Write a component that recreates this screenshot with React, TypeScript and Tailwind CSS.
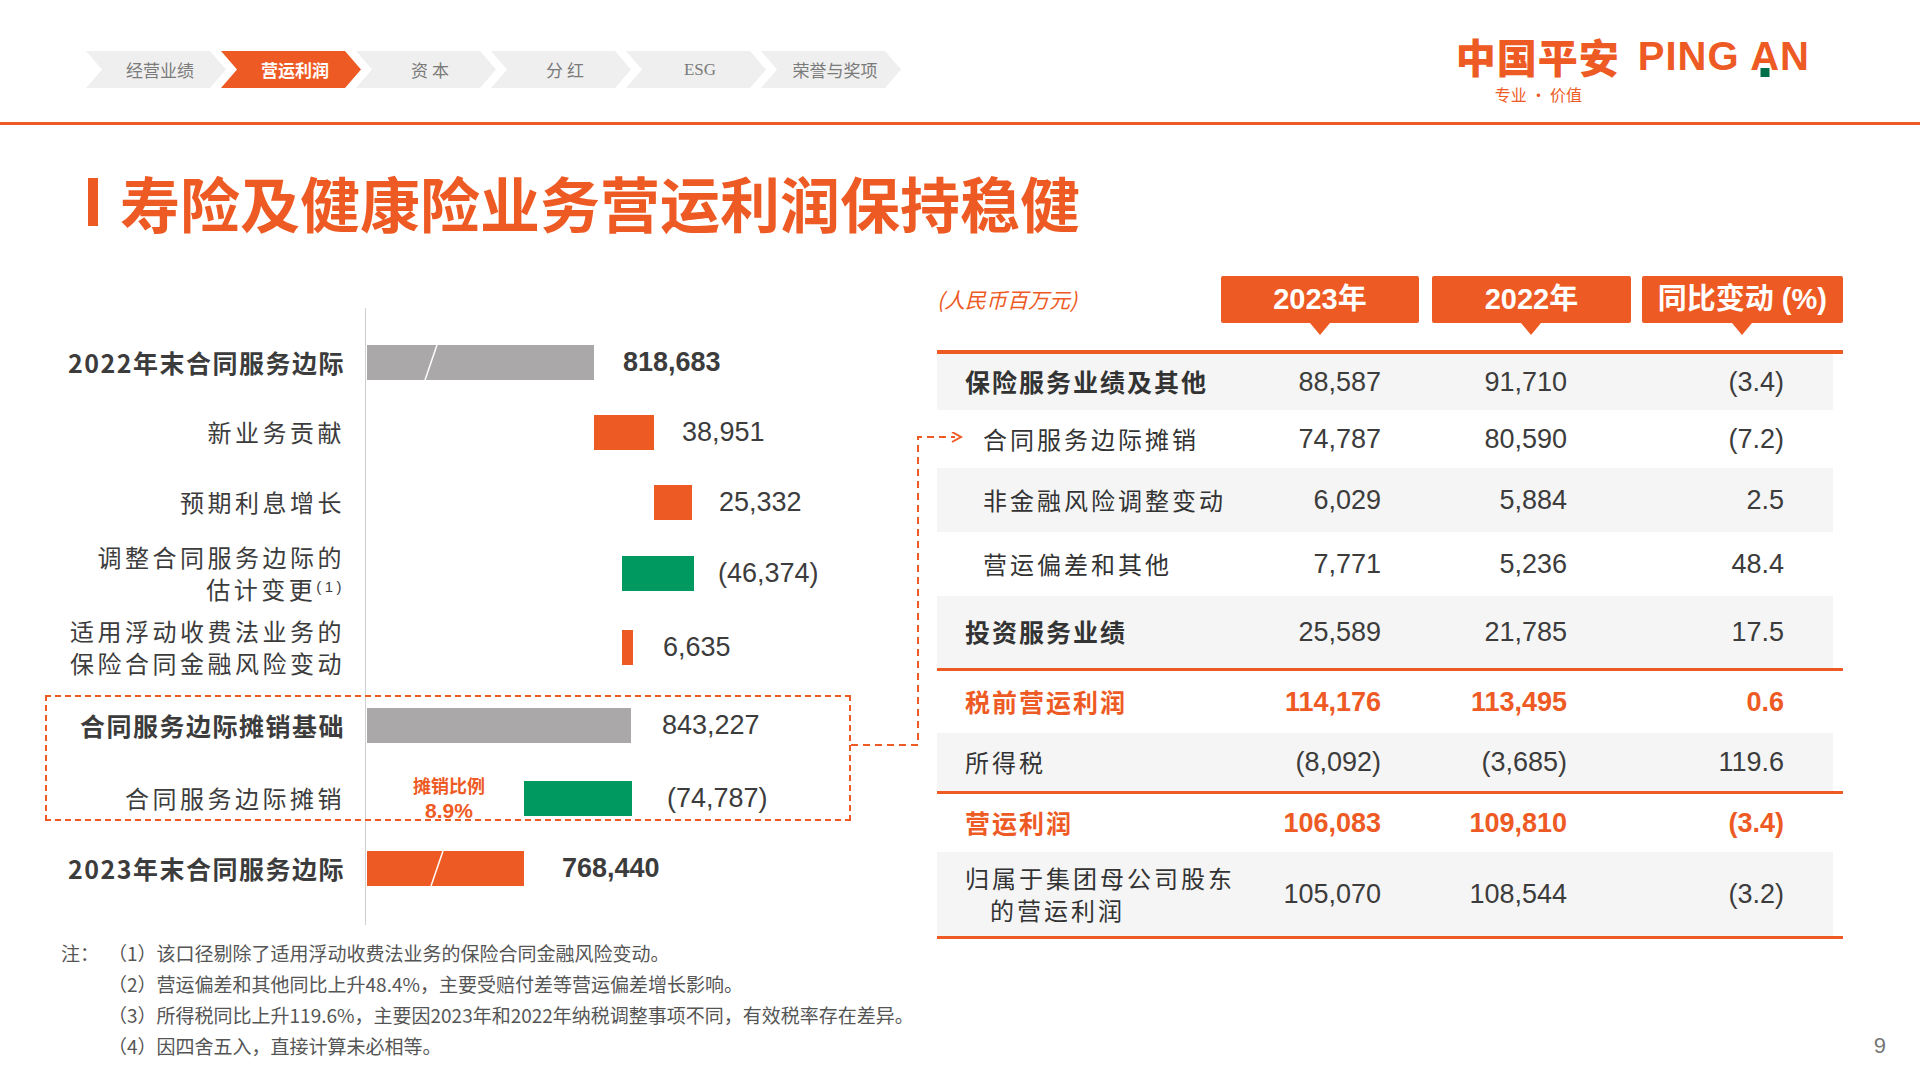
import React from "react";

const OR = "#ee5a24";
const cjk = { fontFamily: '"Noto Sans CJK SC", "Noto Sans", sans-serif' };
const num = { fontFamily: '"Liberation Sans", Arial, sans-serif' };

function Tabs() {
  const tabs = ["经营业绩", "营运利润", "资 本", "分 红", "ESG", "荣誉与奖项"];
  return (
    <div className="flex pt-[51px] pl-[86px]">
      {tabs.map((t, i) => (
        <div
          key={t}
          className={`flex h-[37px] w-[140px] items-center justify-center pl-[8px] text-[17px] [clip-path:polygon(0_0,calc(100%-16px)_0,100%_50%,calc(100%-16px)_100%,0_100%,16px_50%)] ${
            i === 1 ? "bg-[#ee5a24] font-bold text-white" : "bg-[#efefef] text-[#7a7a7a]"
          } ${i === 0 ? "" : "ml-[-5px]"}`}
          style={{ fontFamily: i === 4 ? '"Liberation Serif", serif' : '"Noto Sans CJK SC", serif' }}
        >
          {t}
        </div>
      ))}
    </div>
  );
}

function Logo() {
  return (
    <div className="mr-[110px] flex flex-col pt-[36px]">
      <div className="flex items-center leading-none">
        <span className="text-[40px] font-black tracking-[1px] text-[#ee5a24]" style={cjk}>
          中国平安
        </span>
        <span
          className="ml-[18px] text-[40px] font-bold tracking-[1px] text-[#ee5a24]"
          style={{ fontFamily: '"Liberation Sans", sans-serif' }}
        >
          PING <span className="relative">A<span className="absolute bottom-[1px] left-1/2 h-[9px] w-[9px] -translate-x-1/2 bg-[#00704a]" /></span>N
        </span>
      </div>
      <div className="ml-[39px] mt-[6px] text-[16px] text-[#ee5a24]" style={cjk}>
        专业 · 价值
      </div>
    </div>
  );
}

function Slash({ x }: { x: number }) {
  return (
    <svg className="absolute top-0 h-full" style={{ left: x }} width="16" height="35" viewBox="0 0 16 35">
      <line x1="14" y1="0" x2="2" y2="35" stroke="white" strokeWidth="1.5" />
    </svg>
  );
}

function ChartRow({
  h,
  label,
  bold,
  children,
}: {
  h: string;
  label: React.ReactNode;
  bold?: boolean;
  children: React.ReactNode;
}) {
  return (
    <div className={`flex ${h}`}>
      <div
        className={`flex w-[301px] flex-col items-end justify-center pr-[2px] text-right leading-[32px] text-[#3c3c3c] ${
          bold ? "text-[25px] font-bold tracking-[1.5px]" : "text-[24px] tracking-[3.5px]"
        }`}
        style={cjk}
      >
        {label}
      </div>
      <div className="ml-[18px] flex flex-1 items-center border-l border-[#cfcfcf]">{children}</div>
    </div>
  );
}

const V = ({ ml, bold, children }: { ml: string; bold?: boolean; children: React.ReactNode }) => (
  <span className={`${ml} text-[27px] text-[#3c3c3c] ${bold ? "font-bold" : ""}`} style={num}>
    {children}
  </span>
);

function Chart() {
  return (
    <div className="ml-[46px] flex flex-col pt-[36px]">
      <ChartRow h="h-[19px]" label="">
        <span />
      </ChartRow>
      <ChartRow h="h-[70px]" label="2022年末合同服务边际" bold>
        <div className="relative ml-[1px] h-[35px] w-[227px] bg-[#aaa8a8]">
          <Slash x={56} />
        </div>
        <V ml="ml-[29px]" bold>818,683</V>
      </ChartRow>
      <ChartRow h="h-[70px]" label="新业务贡献">
        <div className="ml-[228px] h-[35px] w-[60px] bg-[#ee5a24]" />
        <V ml="ml-[28px]">38,951</V>
      </ChartRow>
      <ChartRow h="h-[70px]" label="预期利息增长">
        <div className="ml-[288px] h-[35px] w-[38px] bg-[#ee5a24]" />
        <V ml="ml-[27px]">25,332</V>
      </ChartRow>
      <ChartRow
        h="h-[72px]"
        label={
          <>
            <span>调整合同服务边际的</span>
            <span>
              估计变更<sup className="text-[15px]" style={num}>(1)</sup>
            </span>
          </>
        }
      >
        <div className="ml-[256px] h-[35px] w-[72px] bg-[#009a61]" />
        <V ml="ml-[24px]">(46,374)</V>
      </ChartRow>
      <ChartRow
        h="h-[76px]"
        label={
          <>
            <span>适用浮动收费法业务的</span>
            <span>保险合同金融风险变动</span>
          </>
        }
      >
        <div className="ml-[256px] h-[35px] w-[11px] bg-[#ee5a24]" />
        <V ml="ml-[30px]">6,635</V>
      </ChartRow>
      <div className="relative">
        <div className="pointer-events-none absolute left-[-1px] top-[10px] h-[126px] w-[806px] border-2 border-dashed border-[#ee5a24]" />
        <ChartRow h="h-[80px]" label="合同服务边际摊销基础" bold>
          <div className="ml-[1px] h-[35px] w-[264px] bg-[#aaa8a8]" />
          <V ml="ml-[31px]">843,227</V>
        </ChartRow>
        <ChartRow h="h-[66px]" label="合同服务边际摊销">
          <div className="ml-[42px] flex w-[82px] flex-col items-center leading-[26px] text-[#ee5a24]">
            <span className="text-[18px] font-bold" style={cjk}>摊销比例</span>
            <span className="text-[21px] font-bold" style={num}>8.9%</span>
          </div>
          <div className="ml-[34px] h-[35px] w-[108px] bg-[#009a61]" />
          <V ml="ml-[35px]">(74,787)</V>
        </ChartRow>
      </div>
      <ChartRow h="h-[74px]" label="2023年末合同服务边际" bold>
        <div className="relative ml-[1px] h-[35px] w-[157px] bg-[#ee5a24]">
          <Slash x={62} />
        </div>
        <V ml="ml-[38px]" bold>768,440</V>
      </ChartRow>
      <ChartRow h="h-[20px]" label="">
        <span />
      </ChartRow>
    </div>
  );
}

function HeadBox({ w, ml, children }: { w: string; ml: string; children: React.ReactNode }) {
  return (
    <div className={`${ml} ${w} flex flex-col items-center`}>
      <div
        className="flex h-[47px] w-full items-center justify-center rounded-[2px] bg-[#ee5a24] text-[29px] font-bold text-white"
        style={{ fontFamily: '"Liberation Sans", "Noto Sans CJK SC", sans-serif' }}
      >
        {children}
      </div>
      <div className="h-0 w-0 border-l-[10px] border-r-[10px] border-t-[12px] border-l-transparent border-r-transparent border-t-[#ee5a24]" />
    </div>
  );
}

type Row = {
  l: React.ReactNode;
  a: string;
  b: string;
  c: string;
  h: string;
  bg: boolean;
  kind: "bold" | "sub" | "orange" | "plain";
};

const rows: (Row | "line")[] = [
  { l: "保险服务业绩及其他", a: "88,587", b: "91,710", c: "(3.4)", h: "h-[56px]", bg: true, kind: "bold" },
  { l: "合同服务边际摊销", a: "74,787", b: "80,590", c: "(7.2)", h: "h-[58px]", bg: false, kind: "sub" },
  { l: "非金融风险调整变动", a: "6,029", b: "5,884", c: "2.5", h: "h-[64px]", bg: true, kind: "sub" },
  { l: "营运偏差和其他", a: "7,771", b: "5,236", c: "48.4", h: "h-[64px]", bg: false, kind: "sub" },
  { l: "投资服务业绩", a: "25,589", b: "21,785", c: "17.5", h: "h-[72px]", bg: true, kind: "bold" },
  "line",
  { l: "税前营运利润", a: "114,176", b: "113,495", c: "0.6", h: "h-[62px]", bg: false, kind: "orange" },
  { l: "所得税", a: "(8,092)", b: "(3,685)", c: "119.6", h: "h-[58px]", bg: true, kind: "plain" },
  "line",
  { l: "营运利润", a: "106,083", b: "109,810", c: "(3.4)", h: "h-[58px]", bg: false, kind: "orange" },
  {
    l: (
      <span className="flex flex-col leading-[32px]">
        <span>归属于集团母公司股东</span>
        <span className="pl-[25px]">的营运利润</span>
      </span>
    ),
    a: "105,070",
    b: "108,544",
    c: "(3.2)",
    h: "h-[84px]",
    bg: true,
    kind: "plain",
  },
  "line",
];

function Table() {
  return (
    <div className="flex w-[906px] flex-col pt-[4px]">
      <div className="flex h-[74px] items-start">
        <div className="w-[286px] pt-[8px] text-[21px] italic text-[#ee5a24]" style={{ fontFamily: '"Noto Sans CJK SC", serif' }}>
          (人民币百万元)
        </div>
        <HeadBox w="w-[200px]" ml="">2023年</HeadBox>
        <HeadBox w="w-[200px]" ml="ml-[13px]">2022年</HeadBox>
        <HeadBox w="w-[203px]" ml="ml-[11px]">同比变动 (%)</HeadBox>
      </div>
      <div className="h-[4px] w-full bg-[#ee5a24]" />
      {rows.map((r, i) => {
        if (r === "line") return <div key={i} className="h-[3px] w-full bg-[#ee5a24]" />;
        const orange = r.kind === "orange";
        const numCls = `text-right text-[27px] ${orange ? "font-bold text-[#ee5a24]" : "text-[#3c3c3c]"}`;
        return (
          <div key={i} className={`flex w-[896px] items-center ${r.h} ${r.bg ? "bg-[#f5f5f5]" : "bg-white"}`}>
            <div
              className={`w-[330px] ${r.kind === "sub" ? "pl-[46px] text-[24px] tracking-[3px]" : "pl-[28px]"} ${
                r.kind === "bold" ? "text-[25px] font-bold tracking-[2px] text-[#333]" : ""
              } ${orange ? "text-[25px] font-bold tracking-[2px] text-[#ee5a24]" : ""} ${
                r.kind === "plain" ? "text-[24px] tracking-[3px] text-[#333]" : "text-[#333]"
              }`}
              style={cjk}
            >
              {r.l}
            </div>
            <div className={`w-[114px] ${numCls}`} style={num}>{r.a}</div>
            <div className={`w-[186px] ${numCls}`} style={num}>{r.b}</div>
            <div className={`w-[217px] ${numCls}`} style={num}>{r.c}</div>
          </div>
        );
      })}
    </div>
  );
}

export default function App() {
  return (
    <div className="relative h-[1080px] w-[1920px] overflow-hidden bg-white" style={cjk}>
      <div className="flex h-[122px] justify-between">
        <Tabs />
        <Logo />
      </div>
      <div className="h-[3px] w-full bg-[#ee5a24]" />
      <div className="ml-[88px] mt-[47px] flex h-[60px] items-center">
        <div className="h-[48px] w-[10px] bg-[#ee5a24]" />
        <div className="ml-[22px] text-[60px] font-bold leading-none text-[#ee5a24]" style={cjk}>
          寿险及健康险业务营运利润保持稳健
        </div>
      </div>
      <div className="relative mt-[40px] flex">
        <div className="w-[937px]">
          <Chart />
        </div>
        <Table />
        <svg className="pointer-events-none absolute left-[851px] top-[160px]" width="120" height="330" viewBox="0 0 120 330">
          <path d="M0 313 H67 V5 H104" fill="none" stroke={OR} strokeWidth="2" strokeDasharray="7 5" />
          <path d="M101 0 L110 5 L101 10" fill="none" stroke={OR} strokeWidth="2" />
        </svg>
      </div>
      <div className="mt-[-2px] flex justify-between pl-[61px] pr-[34px] text-[19px] leading-[31px] text-[#555]" style={cjk}>
        <div className="flex">
          <span className="w-[47px]">注：</span>
          <div className="flex flex-col">
            <span>（1）该口径剔除了适用浮动收费法业务的保险合同金融风险变动。</span>
            <span>（2）营运偏差和其他同比上升48.4%，主要受赔付差等营运偏差增长影响。</span>
            <span>（3）所得税同比上升119.6%，主要因2023年和2022年纳税调整事项不同，有效税率存在差异。</span>
            <span>（4）因四舍五入，直接计算未必相等。</span>
          </div>
        </div>
        <div className="self-end text-[22px] text-[#777]" style={num}>9</div>
      </div>
    </div>
  );
}
